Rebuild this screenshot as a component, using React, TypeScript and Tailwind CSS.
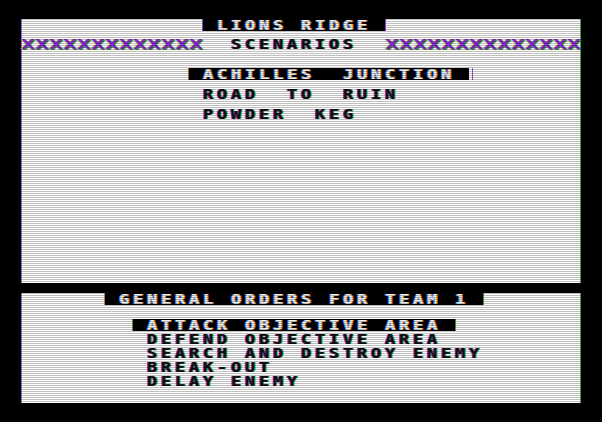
const row = "block h-[12px] leading-[12px] whitespace-pre";
const dark = "text-[#101010] [text-shadow:-1px_0_#9a30e0,1px_0_#30a830]";
const inverse = "bg-black text-[#f4f4f4] [text-shadow:-1px_0_#3a8cff,1px_0_#ff8a30]";
const squash = "inline-block scale-y-[0.82]";
const cross = "inline-block text-[23.25px] tracking-normal scale-y-[0.6] text-[#8a2ae0] [text-shadow:1px_2px_#2a9a20,-1px_0_#d8d840]";

function Bar({ text, col, cols, className = "" }: { text: string; col: number; cols: number; className?: string }) {
  return (
    <div className={`${row} ${inverse} ${className}`} style={{ marginLeft: col * 14, width: cols * 14 }}>
      <span className={squash}>{text}</span>
    </div>
  );
}

function Line({ text, col, className = "" }: { text: string; col: number; className?: string }) {
  return (
    <div className={`${row} ${dark} ${className}`} style={{ marginLeft: col * 14 }}>
      <span className={squash}>{text}</span>
    </div>
  );
}

export default function App() {
  return (
    <div className="relative w-[602px] h-[422px] bg-black pl-[21px] pt-[19px] overflow-hidden">
      <div className="w-[560px] flex flex-col font-['DejaVu_Sans_Mono',monospace] font-bold text-[17px] tracking-[3.77px]">
        {/* scenario list */}
        <div className="h-[264px] bg-white shadow-[inset_1px_0_#a070e0,inset_-1px_0_#50b050]">
          <Bar text=" LIONS RIDGE " col={13} cols={13} className="shadow-[-1px_0_#a050e0,1px_0_#a050e0]" />
          <div className={`${row} mt-[7px] flex`}>
            <span className={cross}>XXXXXXXXXXXXX</span>
            <span className={`${dark} ${squash}`}>  SCENARIOS  </span>
            <span className={cross}>XXXXXXXXXXXXXX</span>
          </div>
          <Bar text=" ACHILLES  JUNCTION " col={12} cols={20} className="mt-[18px] shadow-[-1px_0_#c07020,3px_0_#fff,4px_0_#a050e0]" />
          <Line text="ROAD  TO  RUIN" col={13} className="mt-[8px]" />
          <Line text="POWDER  KEG" col={13} className="mt-[8px]" />
        </div>

        <div className="h-[10px]" />

        {/* orders */}
        <div className="h-[110px] bg-white shadow-[inset_1px_0_#a070e0,inset_-1px_0_#50b050]">
          <Bar text=" GENERAL ORDERS FOR TEAM 1 " col={6} cols={27} className="shadow-[-1px_0_#c0a040,1px_0_#40a040]" />
          <Bar text=" ATTACK OBJECTIVE AREA " col={8} cols={23} className="mt-[14px] shadow-[-1px_0_#60a040,1px_0_#40a040]" />
          <Line text="DEFEND OBJECTIVE AREA" col={9} className="mt-[2px]" />
          <Line text="SEARCH AND DESTROY ENEMY" col={9} className="mt-[2px]" />
          <Line text="BREAK-OUT" col={9} className="mt-[2px]" />
          <Line text="DELAY ENEMY" col={9} className="mt-[2px]" />
        </div>
      </div>

      {/* scanlines */}
      <div className="pointer-events-none absolute inset-0 bg-[image:repeating-linear-gradient(to_bottom,transparent_0px,transparent_1px,rgba(0,0,0,0.25)_1px,rgba(0,0,0,0.25)_2px)]" />
    </div>
  );
}
